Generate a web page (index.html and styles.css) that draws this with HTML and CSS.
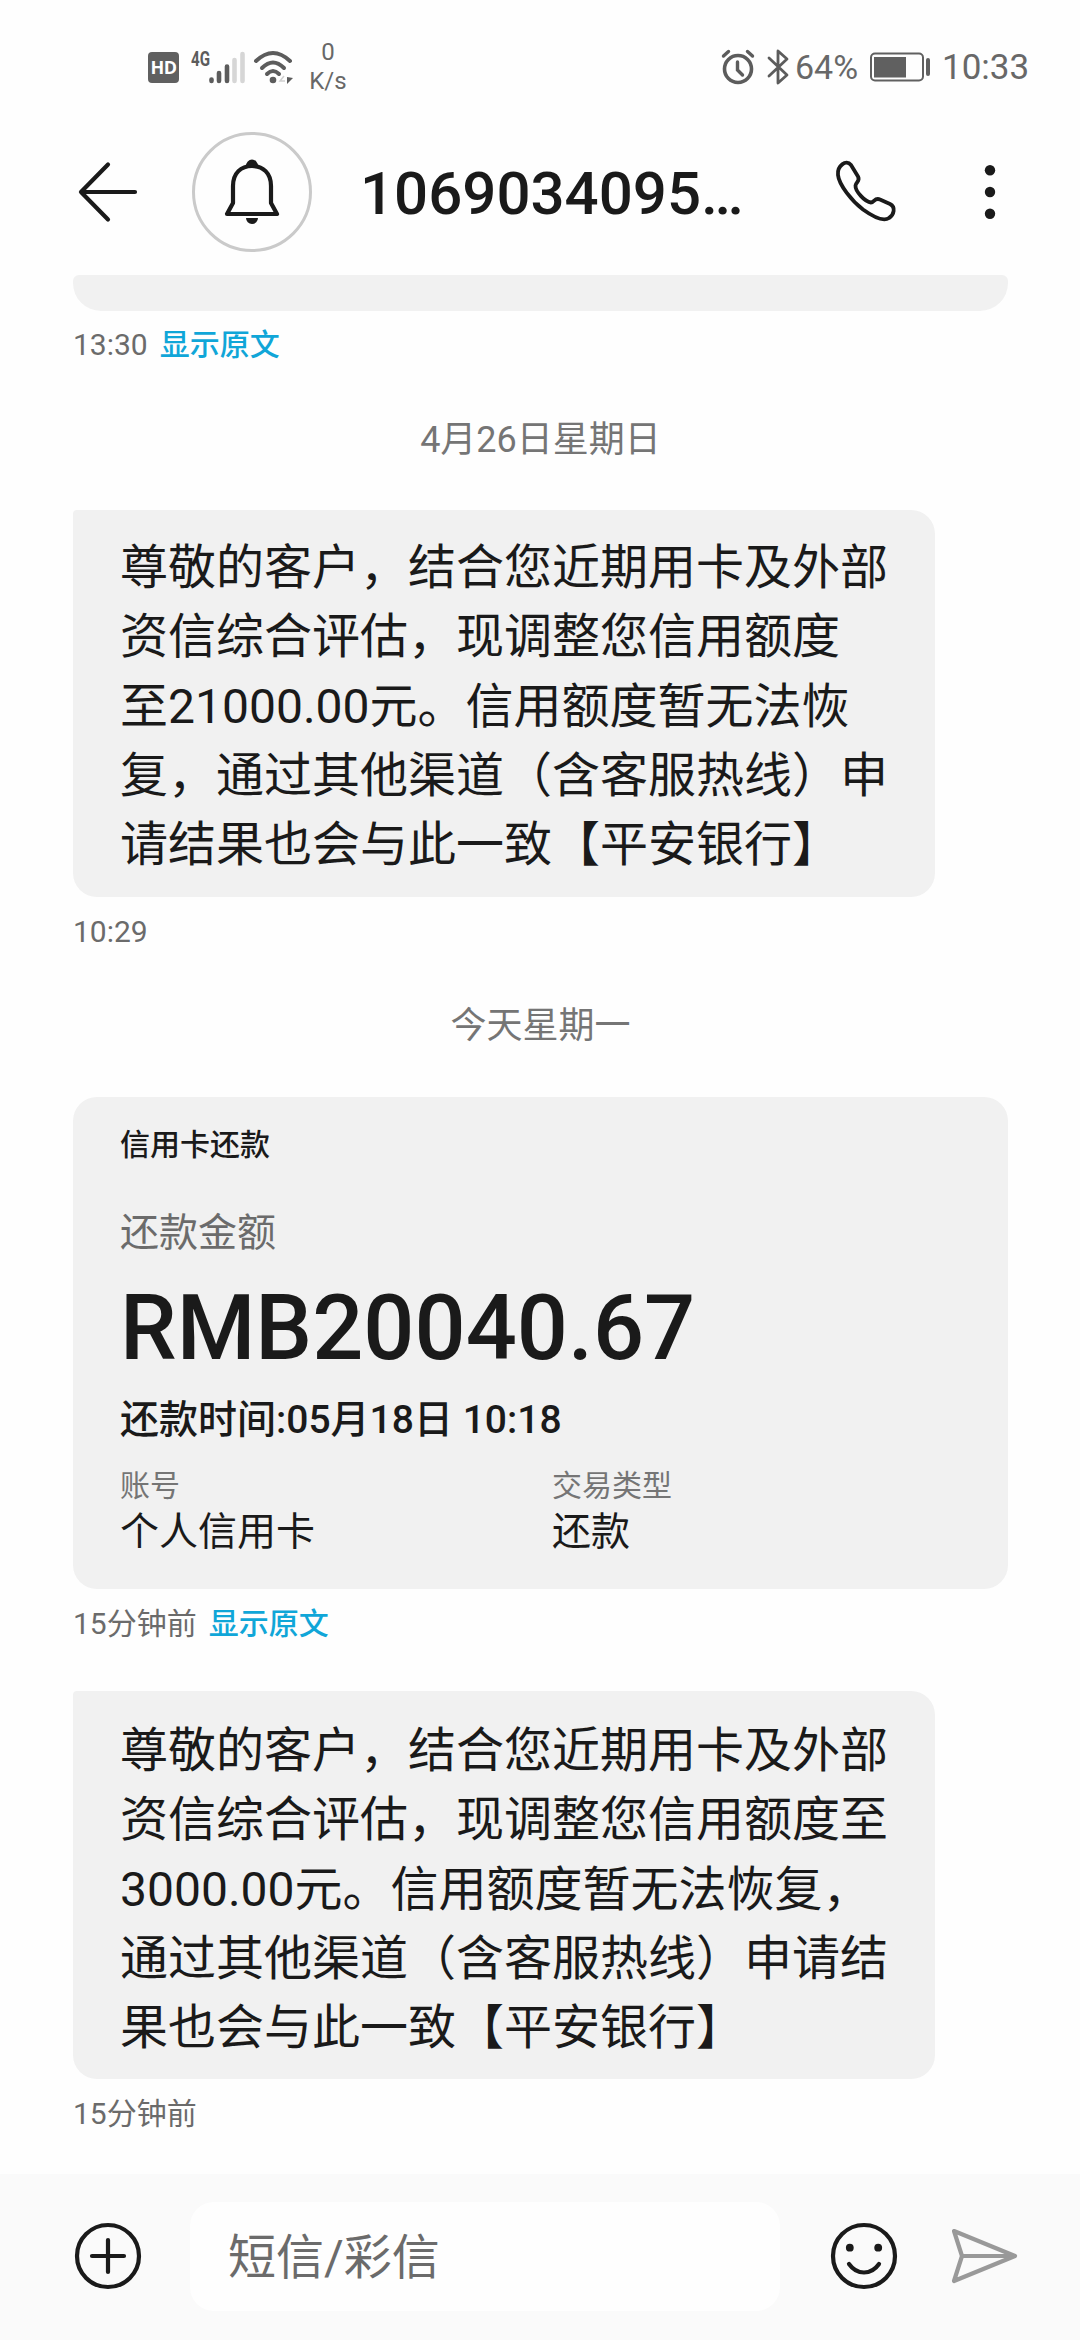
FILE: index.html
```html
<!DOCTYPE html>
<html lang="zh-CN">
<head>
<meta charset="utf-8">
<title>短信</title>
<link rel="stylesheet" href="styles.css">
</head>
<body>
<div class="screen">
  <div class="status">
    <div class="status-left">
      <span class="hd"><span>HD</span></span>
      <svg class="signal" width="54" height="40" viewBox="0 -3 54 40"><text x="0" y="15.5" class="gen-text" textLength="19" lengthAdjust="spacingAndGlyphs">4G</text><g stroke-width="4.6" stroke-linecap="round"><path d="M20.5 29.5v1.500M28 23v8M36 16.5V31" stroke="#5c5c5c"/><path d="M43.5 10v21M51.5 4v27" stroke="#d6d6d6"/></g></svg>
      <svg class="wifi" width="42" height="34" viewBox="0 0 42 34"><g fill="none" stroke="#5c5c5c" stroke-width="4" stroke-linecap="round"><path d="M3 11Q20 -5 37 11"/><path d="M9 18Q20 7 31 18"/><path d="M14 24Q20 18 26 24"/></g><circle cx="20" cy="30" r="3.3" fill="#5c5c5c"/><path d="M34 27v7l6-6z" fill="#5c5c5c"/><path d="M31 26l-4 5h5" fill="none" stroke="#d0d0d0" stroke-width="1.5"/></svg>
      <div class="speed"><span>0</span><span>K/s</span></div>
    </div>
    <div class="status-right">
      <svg width="34" height="36" viewBox="0 0 34 36" fill="none" stroke="#5c5c5c" stroke-linecap="round"><circle cx="17" cy="20" r="13.5" stroke-width="3.6"/><path d="M16.500 13v8l5 5" stroke-width="3.4"/><path d="M2.500 7l5-4.500M31.500 7l-5-4.500" stroke-width="3.4"/></svg>
      <svg class="bt" width="24" height="36" viewBox="0 0 24 36"><path d="M3 9l18 17-9 8V2l9 8L3 27" fill="none" stroke="#5c5c5c" stroke-width="2.800" stroke-linecap="round" stroke-linejoin="round"/></svg>
      <span class="percent">64%</span>
      <svg class="battery" width="62" height="30" viewBox="0 0 62 30"><rect x="1" y="1.500" width="52" height="27" rx="4" fill="none" stroke="#606060" stroke-width="2"/><rect x="4" y="5" width="32" height="20.500" fill="#606060"/><rect x="56" y="6" width="4" height="18" rx="2" fill="#606060"/></svg>
      <span class="clock">10:33</span>
    </div>
  </div>

  <header class="header">
    <svg class="back" width="60" height="64" viewBox="0 0 60 64"><path d="M30 4.500L3 32l27 27.500M3 32h54" fill="none" stroke="#1a1a1a" stroke-width="4.200" stroke-linecap="round" stroke-linejoin="round"/></svg>
    <div class="avatar">
      <svg width="60" height="70" viewBox="0 0 60 70"><path d="M11 46V29C11 16 19 9 30 9S49 16 49 29V46L55 57H5Z" fill="none" stroke="#1a1a1a" stroke-width="4.200" stroke-linejoin="round"/><path d="M24 9a6 6.500 0 0 1 12 0zM24 61h12a6 6 0 0 1-12 0z" fill="#1a1a1a"/></svg>
    </div>
    <h1 class="title">1069034095…</h1>
    <svg class="phone" width="60" height="62" viewBox="0 0 60 62"><path d="M2 14C1 5 10-2 15 4L22 15.500C24.500 20 20 21 19.500 24.500C19 30 29 41 35 41.500C38 41.500 39 36 44 38.500L54 43C60 46 58 54 53 57C47 61 36 55 27 48.500C16 40 3 24 2 14Z" fill="none" stroke="#1a1a1a" stroke-width="3.800" stroke-linejoin="round"/></svg>
    <svg class="more" width="12" height="56" viewBox="0 0 12 56" fill="#1a1a1a"><circle cx="6" cy="6.300" r="5.200"/><circle cx="6" cy="28" r="5.200"/><circle cx="6" cy="49.700" r="5.200"/></svg>
  </header>

  <main class="chat">
    <div class="strip"></div>
    <div class="meta meta-first"><span>13:30</span><a class="link">显示原文</a></div>
    <div class="date date-first">4月26日星期日</div>
    <div class="bubble">
      <p>尊敬的客户，结合您近期用卡及外部</p>
      <p>资信综合评估，现调整您信用额度</p>
      <p>至21000.00元。信用额度暂无法恢</p>
      <p>复，通过其他渠道（含客服热线）申</p>
      <p>请结果也会与此一致【平安银行】</p>
    </div>
    <div class="meta"><span>10:29</span></div>
    <div class="date">今天星期一</div>
    <section class="card">
      <div class="card-title">信用卡还款</div>
      <div class="card-label">还款金额</div>
      <div class="amount">RMB20040.67</div>
      <div class="card-time">还款时间:05月18日 10:18</div>
      <div class="fields">
        <div><div class="key">账号</div><div class="value">个人信用卡</div></div>
        <div><div class="key">交易类型</div><div class="value">还款</div></div>
      </div>
    </section>
    <div class="meta"><span>15分钟前</span><a class="link">显示原文</a></div>
    <div class="bubble bubble-last">
      <p>尊敬的客户，结合您近期用卡及外部</p>
      <p>资信综合评估，现调整您信用额度至</p>
      <p>3000.00元。信用额度暂无法恢复，</p>
      <p>通过其他渠道（含客服热线）申请结</p>
      <p>果也会与此一致【平安银行】</p>
    </div>
    <div class="meta"><span>15分钟前</span></div>
  </main>

  <footer class="composer">
    <svg width="68" height="68" viewBox="0 0 68 68" fill="none" stroke="#1a1a1a" stroke-width="4.200" stroke-linecap="round"><circle cx="34" cy="34" r="31"/><path d="M34 18v32M18 34h32"/></svg>
    <div class="input">短信/彩信</div>
    <svg width="68" height="68" viewBox="0 0 68 68"><g fill="none" stroke="#1a1a1a" stroke-width="4.200" stroke-linecap="round"><circle cx="34" cy="34" r="31"/><path d="M19 42q6 8.500 15 8.500t15-8.500"/></g><circle cx="19.800" cy="25.700" r="3.900" fill="#1a1a1a"/><circle cx="48.200" cy="25.700" r="3.900" fill="#1a1a1a"/></svg>
    <svg class="send" width="68" height="56" viewBox="0 0 68 56"><path d="M3 3l61 25L3 53l8-25zM11 28h53" fill="none" stroke="#999" stroke-width="4.200" stroke-linejoin="round"/></svg>
  </footer>
</div>
</body>
</html>
```
FILE: styles.css
```css
* { box-sizing: border-box; margin: 0; padding: 0; }
body {
  width: 1080px;
  height: 2340px;
  background: #fefefe;
  color: #1a1a1a;
  font-family: Roboto, "Noto Sans CJK SC", sans-serif;
  text-spacing-trim: space-all;
}
.screen { display: flex; flex-direction: column; height: 2340px; overflow: hidden; }

.status {
  display: flex;
  justify-content: space-between;
  height: 118px;
  padding: 0 51px 0 148px;
  color: #686868;
}
.status-left, .status-right { display: flex; align-items: center; height: 134px; }
.status-left svg { display: block; }
.hd {
  display: flex;
  align-items: center;
  justify-content: center;
  width: 31px;
  height: 31px;
  border-radius: 4px;
  background: #606060;
  color: #fff;
  font: 700 18px/31px "Open Sans", sans-serif;
  letter-spacing: -0.5px;
}
.gen-text { font: 700 20px Roboto, sans-serif; fill: #5c5c5c; }
.signal { margin-left: 12px; }
.wifi { margin-left: 8px; }
.speed { display: flex; flex-direction: column; align-items: center; width: 40px; margin-left: 13px; font-size: 24px; line-height: 29px; }
.status-right { font-size: 35px; }
.bt { margin-left: 11px; }
.percent { margin-left: 5px; width: 66px; font-size: 34px; }
.battery { margin-left: 9px; }
.clock { margin-left: 10px; width: 87px; }

.header { display: flex; align-items: center; height: 157px; padding: 0 84px 9px 78px; }
.avatar {
  display: flex;
  align-items: center;
  justify-content: center;
  width: 120px;
  height: 120px;
  margin-left: 54px;
  border: 3px solid #cacaca;
  border-radius: 50%;
}
.title { width: 402px; height: 80px; padding-top: 2px; margin-left: 48px; font-size: 60px; font-weight: 500; line-height: 80px; }
.phone { margin-left: 74px; overflow: visible; }
.more { margin-left: auto; }

.chat { flex: 1; padding: 0 72px 0 73px; }
.strip { height: 36px; background: #f1f1f1; border-radius: 6px 6px 28px 28px; }
.meta {
  display: flex;
  gap: 12px;
  height: 44px;
  margin-top: 13px;
  color: #6b6b6b;
  font-size: 30px;
  line-height: 44px;
}
.meta-first { margin-top: 12px; }
.link { color: #10a6d8; font-weight: 500; }
.date { height: 54px; margin-top: 45px; color: #757575; font-size: 36px; line-height: 54px; text-align: center; }
.date-first { margin-top: 46px; }
.bubble {
  width: 862px;
  height: 387px;
  margin-top: 43px;
  padding: 23px 0 0 47px;
  background: #f1f1f1;
  border-radius: 4px 24px 24px 24px;
  font-size: 48px;
  line-height: 69.3px;
  white-space: nowrap;
}
.bubble-last { margin-top: 45px; height: 388px; padding-top: 25px; }

.card { height: 492px; margin-top: 44px; padding: 26px 47px 0; background: #f1f1f1; border-radius: 24px; }
.card-title { font-size: 30px; font-weight: 500; line-height: 44px; }
.card-label { margin-top: 38px; color: #6b6b6b; font-size: 39px; line-height: 56px; }
.amount { margin-top: 15px; font-size: 90px; font-weight: 500; line-height: 106px; }
.card-time { margin-top: 10px; font-size: 39px; font-weight: 500; line-height: 56px; }
.fields { display: grid; grid-template-columns: 432px 1fr; margin-top: 16px; }
.key { color: #757575; font-size: 30px; line-height: 44px; }
.value { font-size: 39px; line-height: 48px; }

.composer { display: flex; align-items: center; height: 166px; padding: 0 60px 2px 74px; background: #fafafa; }
.input {
  width: 590px;
  height: 109px;
  margin: 0 50px 0 48px;
  padding-left: 38px;
  border-radius: 24px;
  background: #fefefe;
  color: #6b6b6b;
  font-size: 48px;
  line-height: 112px;
}
.send { margin-left: 53px; }
```
